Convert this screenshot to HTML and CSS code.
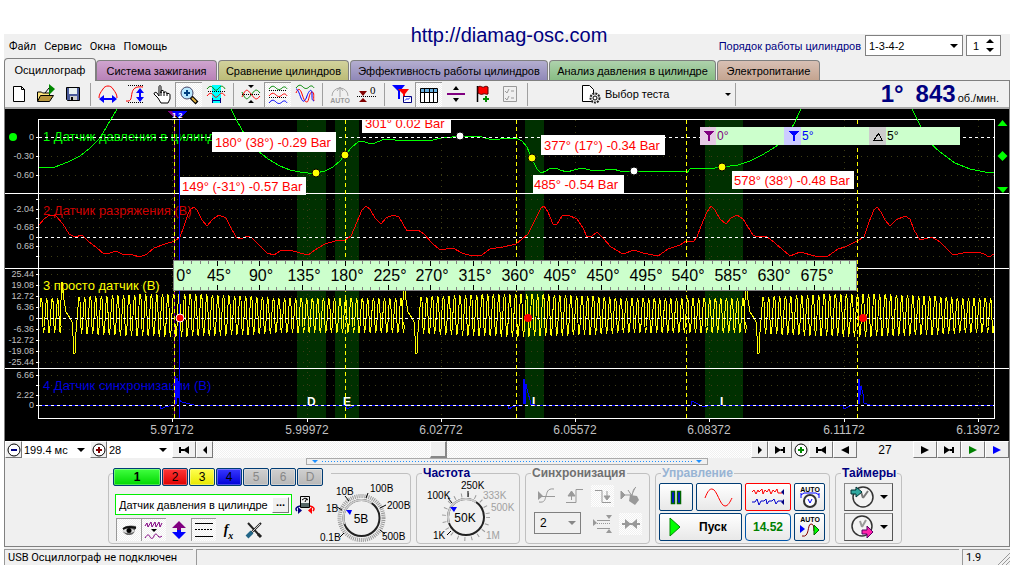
FILE: index.html
```html
<!DOCTYPE html>
<html lang="ru">
<head>
<meta charset="utf-8">
<title>USB Осциллограф</title>
<link rel="stylesheet" href="styles.css">
</head>
<body>
<a class="site-link" href="http://diamag-osc.com">http://diamag-osc.com</a>
<div class="app">
  <header class="topbar">
    <nav class="menu">
      <button>Файл</button><button>Сервис</button><button>Окна</button><button>Помощь</button>
    </nav>
    <label class="order-label" for="order">Порядок работы цилиндров</label>
    <div class="select-box order"><select id="order"><option>1-3-4-2</option></select><i class="caret"></i></div>
    <div class="spin"><input type="text" value="1" aria-label="Цилиндр"><span class="spin-arrows"><i class="caret up"></i><i class="caret"></i></span></div>
  </header>

  <div class="tabs" role="tablist">
    <button class="tab tab-main" role="tab" aria-selected="true">Осциллограф</button>
    <button class="tab tab-ignition" role="tab">Система зажигания</button>
    <button class="tab tab-compare" role="tab">Сравнение цилиндров</button>
    <button class="tab tab-effect" role="tab">Эффективность работы цилиндров</button>
    <button class="tab tab-pressure" role="tab">Анализ давления в цилиндре</button>
    <button class="tab tab-power" role="tab">Электропитание</button>
  </div>

  <main class="panel">
    <div class="toolbar">
      <button class="tool" aria-label="Новый"><svg viewBox="0 0 20 20"><path d="M4.500 2.500h8l3 3v12h-11zM12.500 2.500v3h3" fill="#fff" stroke="#000"/></svg></button>
      <button class="tool" aria-label="Открыть"><svg viewBox="0 0 20 20"><path d="M1.500 17v-9h4l1 1h7v3" fill="#ffe680" stroke="#000"/><path d="M1.500 17.500l3-6h13l-4 6z" fill="#b8963c" stroke="#000"/><path d="M13 0l6 5-6 6z" fill="#080"/><path d="M9 9l4-5" stroke="#000"/></svg></button>
      <button class="tool" aria-label="Сохранить"><svg viewBox="0 0 20 20"><path d="M3.500 3.500h13v13h-12l-1-1z" fill="#4a5a9a" stroke="#000"/><path d="M6 4h8v6H6z" fill="#e8f0f0"/><path d="M7 12h7v4H7z" fill="#ccc"/><path d="M8 13h2v3H8z" fill="#000"/></svg></button>
      <i class="sep"></i>
      <button class="tool" aria-label="Развернуть по горизонтали"><svg viewBox="0 0 20 20"><path d="M1 14c0-3 1-5 4-9 2-4 8-4 10 0 3 4 4 6 4 9" fill="none" stroke="red"/><path d="M4 15h12" stroke="#00f" stroke-width="2"/><path d="M1 15l5-4v8zM19 15l-5-4v8z" fill="#00f"/></svg></button>
      <button class="tool" aria-label="Развернуть по вертикали"><svg viewBox="0 0 20 20"><path d="M1 17c6 1 5-4 6-8s3-7 11-6" fill="none" stroke="red"/><path d="M3 1.500h15M3 18.500h15" stroke="#000" stroke-dasharray="1 1"/><path d="M15 7v8" stroke="#00f" stroke-width="2"/><path d="M15 4l4 5h-8zM15 18l4-5h-8z" fill="#00f"/></svg></button>
      <button class="tool" aria-label="Рука"><svg viewBox="0 0 20 20"><path d="M7 12V3c0-2 2-2 2 0v6-2c0-1 3-1 3 1v1c0-2 3-1 3 0v1c0-1 3-1 3 1v4l-2 4H9l-3-5-4-4c0-2 2-2 3-1z" fill="#fff" stroke="#000"/><path d="M9 8v4M12 8v4M15 9v3" stroke="#000"/></svg></button>
      <button class="tool pressed" aria-label="Лупа"><svg viewBox="0 0 20 20"><path d="M12 12l6 6" stroke="#000" stroke-width="4"/><path d="M13 13l4 4" stroke="#e0b040" stroke-width="2"/><circle cx="8" cy="8" r="6" fill="#b8e8ff" stroke="#446"/><path d="M8 5v6M5 8h6" stroke="#004080" stroke-width="2"/></svg></button>
      <button class="tool" aria-label="Выделить участок"><svg viewBox="0 0 20 20"><path d="M6 1h9v18H6z" fill="#0ff"/><path d="M1 5c3-4 5-3 7 0s4 0 6-2 4 0 5 2" fill="none" stroke="#080"/><path d="M2 7.500h17" stroke="#000" stroke-dasharray="1 1"/><path d="M1 12c3-4 5-3 7 0s4 0 6-2 4 0 5 2" fill="none" stroke="red"/><path d="M7 16.500h7M6.500 14v5M14.500 14v5" stroke="#000080"/></svg></button>
      <i class="sep"></i>
      <button class="tool" aria-label="Совместить"><svg viewBox="0 0 20 20"><path d="M1 8c4 9 5 8 9 3s5-7 9-2" fill="none" stroke="#080"/><path d="M1 13c4-9 5-8 9-3s5 7 9 2" fill="none" stroke="red"/><path d="M1 10.500h18" stroke="#000" stroke-dasharray="1 1"/><path d="M7 1h6l-3 3zM7 19h6l-3-3z"/></svg></button>
      <button class="tool pressed" aria-label="Разделить"><svg viewBox="0 0 20 20"><g fill="none"><path d="M1 4c3-4 5-3 7-1s4 2 6 0 4-1 5 1" stroke="#080"/><path d="M1 11c3-4 5-3 7-1s4 2 6 0 4-1 5 1" stroke="red"/><path d="M1 18c3-4 5-3 7-1s4 2 6 0 4-1 5 1" stroke="#00f"/><path d="M1 5.500h18M1 12.500h18" stroke="#000" stroke-dasharray="1 1"/></g></svg></button>
      <button class="tool" aria-label="Наложить"><svg viewBox="0 0 20 20"><g fill="none"><path d="M1 4c3-4 5-3 7-1s4 2 6 0 4-1 5 1" stroke="#080"/><path d="M1 9c2-5 4-5 6 1s3 8 5 8 2-10 5-10 1 6 2 9" stroke="red"/><path d="M1 5c2 0 3 4 5 9s4 4 6-2 5-8 5-2 0 6 2 7" stroke="#00f"/></g></svg></button>
      <i class="sep"></i>
      <button class="tool" disabled aria-label="Авто"><svg viewBox="0 0 20 20"><path d="M2 12a8 8 0 1 1 16 0M10 13V4M10 3l-3 4M10 3l3 4" fill="none" stroke="#aaa"/><text class="tiny" x="10" y="19" text-anchor="middle" fill="#999">AUTO</text></svg></button>
      <button class="tool" aria-label="Обнулить"><svg viewBox="0 0 20 20"><path d="M2 7h8l-4 5zM2 18h8l-4-4z" fill="#800000"/><path d="M0 12.500h19" stroke="#000" stroke-dasharray="1 1"/><text class="zero" x="13" y="10">0</text></svg></button>
      <i class="sep"></i>
      <button class="tool" aria-label="Маркеры"><svg viewBox="0 0 20 20"><path d="M0 1h13L8 7v8H6V7z" fill="#00f"/><path d="M6 5h11l-4 5v5h-2v-5z" fill="red"/><path d="M11.500 12.500h8v6h-8z" fill="#fff" stroke="#000080"/><path d="M13 16.500l2-2 1 1 2-2" fill="none" stroke="#00f"/></svg></button>
      <button class="tool pressed" aria-label="Таблица"><svg viewBox="0 0 20 20"><path d="M1.500 3.500h17v14h-17z" fill="#fff" stroke="#000"/><path d="M2 4h16v3H2z" fill="#68b0e0"/><path d="M1 7.500h18M5.500 4v14M10.500 4v14M14.500 4v14" stroke="#000"/></svg></button>
      <button class="tool" aria-label="Линейка"><svg viewBox="0 0 20 20"><path d="M1 10h18" stroke="#800080" stroke-width="2"/><path d="M7 6h6l-3-4zM7 14h6l-3 4z"/></svg></button>
      <button class="tool" aria-label="Флаг"><svg viewBox="0 0 20 20"><path d="M4.500 2v16" stroke="#000" stroke-width="1.500"/><path d="M5 3c3-2 4 1 6 0s2-1 4 0v7c-2 1-3-1-5 0s-3 0-5-1z" fill="red" stroke="#500"/><path d="M13 12v6M10 15h6" stroke="#080" stroke-width="2"/></svg></button>
      <button class="tool" disabled aria-label="Список"><svg viewBox="0 0 20 20"><path d="M3.500 2.500h13v15h-13z" fill="none" stroke="#999"/><path d="M5 7l2 2 2-4M5 14l2 2 2-4M11 7h3M11 14h3" fill="none" stroke="#999"/></svg></button>
      <i class="sep"></i>
      <button class="test-picker"><svg viewBox="0 0 20 20"><path d="M1.500 1.500h7l4 4v12h-11z" fill="#fff" stroke="#000"/><circle cx="14" cy="14" r="4.500" fill="#eee" stroke="#222" stroke-width="2" stroke-dasharray="2 1"/><circle cx="14" cy="14" r="2" fill="#fff" stroke="#000"/></svg><span>Выбор теста</span><i class="caret"></i></button>
      <i class="sep"></i>
      <output class="rpm"><b>1°</b><b>843</b><span>об./мин.</span></output>
    </div>

    <svg class="chart" viewBox="5 109 1004 332" role="img" aria-label="Осциллограммы">
      <defs><clipPath id="plot"><path d="M39 120h955v298H39z"/></clipPath></defs>
      <path d="M5 109h1004v332H5z"/>
      <path class="band" d="M297 120h29v298h-29zM335 120h24v298h-24zM525 120h19v298h-19zM705 120h38v298h-38z"/>
      <g id="grid"></g>
      <path class="frame" d="M38.500 119.500h956v299h-956zM5 193.500h1004M5 268.500h1004M5 368.500h1004"/>
      <g class="scale" id="scale"></g>
      <g class="sensor">
        <text x="43" y="141" fill="#0f0">1 Датчик давления в цилиндре (В)</text>
        <text x="43" y="215" fill="#d00000">2 Датчик разряжения (В)</text>
        <text x="43" y="290" fill="#ff0">3 просто датчик (В)</text>
        <text x="43" y="390" fill="#00d">4 Датчик синхронизации (В)</text>
      </g>
      <polyline class="wave" stroke="#0f0" points="39,167 55,167 68,162 80,156 90,148 100,138 107,126 117,109"/>
      <polyline class="wave" stroke="#0f0" points="231,109 236,119 241,128 248,140 257,150 268,159 280,166 290,170 300,172 308,173 316,173 325,171 333,167 340,161 345,155 352,147 358,142 362,141 368,143 375,143 382,140 390,139 400,141 412,140 420,141 433,140 441,138 452,137 460,136 482,137 492,140 500,139 516,138 522,141 527,147 531,157 534,163 537,169 541,173 546,171 551,168 556,168 560,170 567,172 574,170 582,168 590,170 598,171 613,169 620,171 686,171 687,173 690,169 715,168 722,167 738,165 750,161 762,155 772,149 778,145 787,134 794,124 801,109"/>
      <polyline class="wave" stroke="#0f0" points="912,109 920,125 930,143 940,152 955,163 970,169 985,172 994,173"/>
      <polyline class="wave" stroke="red" points="39,225 45,218 50,215 56,216 63,224 69,234 75,237 82,235 88,241 97,248 104,254 110,253 116,251 122,254 133,255 140,257 147,254 154,248 165,244 175,241 180,237 184,226 188,214 191,209 194,207 197,210 202,220 207,226 213,219 219,215 226,218 230,226 236,237 241,239 247,236 252,238 260,246 267,253 274,255 280,251 290,250 300,253 308,255 315,250 325,244 335,241 345,240 351,236 357,222 362,210 366,206 370,209 375,218 381,224 386,218 393,215 399,217 407,231 418,230 424,234 432,243 440,250 453,248 462,253 472,256 482,255 490,249 503,247 516,244 528,234 536,218 541,208 544,206 548,212 553,224 557,224 562,216 568,215 577,219 583,228 587,237 592,236 597,232 603,238 611,247 623,254 634,250 643,253 658,256 668,249 680,245 686,241 693,242 697,237 701,226 707,212 711,206 715,210 720,219 726,224 731,218 737,215 743,219 753,235 757,237 766,236 775,243 790,256 800,252 815,256 828,256 838,249 845,247 857,241 864,237 869,222 874,210 877,207 881,212 885,220 890,226 896,220 905,216 910,219 914,230 920,240 932,237 940,242 953,255 968,252 978,252 984,254 989,257 994,254"/>
      <polyline class="wave" id="teeth" stroke="#ff0"/>
      <g class="phase">
        <text x="307" y="406">D</text><text x="343" y="406">E</text><text x="532" y="406">I</text><text x="720" y="406">I</text>
      </g>
      <path class="zero-line" d="M39 137.500h955M39 237.500h955M39 318.500h955"/>
      <polyline class="wave sync" points="39,405.500 160,405.500 161,409 165,407 174,405 175,376 176,405 177,378 178,398 179,381 179,400 182,402 190,404 196,405.500 346,405.500 347,409 354,406 360,405.500 508,405.500 509,409 512,407 516,405.500 523,405 524,379 525,404 526,384 528,393 530,400 530,404 538,405.500 691,405.500 692,401 698,404 704,407 708,405.500 843,405.500 844,409 850,406 858,405 859,379 859,404 861,386 863,394 864,403 871,405.500 994,405.500"/>
      <path class="zero-line sync-zero" d="M39 405.500h955"/>
      <path d="M174.500 120v298" stroke="#800080"/>
      <path d="M179.500 120v298" stroke="#00f"/>
      <path class="tdc" d="M174.500 120v298M345.500 120v298M516.500 120v298M686.500 120v298M857.500 120v298"/>
      <path d="M167 111h12l-5 7z" fill="#800080"/><path d="M172 111h15l-8 8z" fill="#00f"/>
      <text class="flag-no" x="172" y="118">1</text><text class="flag-no" x="178" y="118">2</text>
      <g class="ruler"><path d="M173.500 260.500h683v30h-683z"/><g id="ruler"></g></g>
      <g class="legend">
        <path d="M700 127h260v18H700z" fill="#cfc"/>
        <path d="M700 127h16v18h-16z" fill="#e6cce6"/><path d="M784 127h17v18h-17z" fill="#ccf"/><path d="M869 127h17v18h-17z" fill="#ccc"/>
        <path d="M703 131h11l-4 5v5h-2v-5z" fill="#800080"/><path d="M788 131h11l-4 5v5h-2v-5z" fill="#00f"/><path d="M873.500 140.500h9l-4-7z" fill="none" stroke="#000"/>
        <text x="717" y="140" fill="#800080">0°</text><text x="802" y="140" fill="#00f">5°</text><text x="887" y="140">5°</text>
      </g>
      <g class="readout">
        <path d="M212 132h124v20H212zM180 177h126v18H180zM362 120h89v13h-89zM541 135h124v20H541zM533 175h91v18h-91zM732 171h122v18H732z"/>
        <text x="215" y="147">180° (38°) -0.29 Bar</text><text x="182" y="191">149° (-31°) -0.57 Bar</text><text clip-path="url(#plot)" x="365" y="128">301° 0.02 Bar</text>
        <text x="544" y="150">377° (17°) -0.34 Bar</text><text x="534" y="189">485° -0.54 Bar</text><text x="734" y="185">578° (38°) -0.48 Bar</text>
      </g>
      <g class="dots" fill="#ff0" stroke="#000"><circle cx="316" cy="173" r="4"/><circle cx="345" cy="155" r="4"/><circle cx="532" cy="158" r="4"/><circle cx="722" cy="167" r="4"/><g fill="#fff"><circle cx="460" cy="136" r="4"/><circle cx="634" cy="171" r="4"/></g></g>
      <g class="dots" fill="red"><circle cx="180" cy="318" r="4" stroke="#fff"/><circle cx="528" cy="318" r="4"/><circle cx="863" cy="318" r="4"/></g>
      <g class="dots" fill="#0f0"><circle cx="13" cy="137" r="4"/><path d="M1002.500 120l5 6h-10zM1002.500 151l5 5-5 5-5-5zM997 187h11l-5 6z"/></g>
    </svg>

    <div class="scrollbar">
      <button class="nav round" aria-label="Меньше времени"><svg viewBox="0 0 16 16"><circle cx="8" cy="8" r="6" fill="#fff" stroke="#000"/><path d="M5 8h6" stroke="#000080" stroke-width="2"/></svg></button>
      <div class="combo combo-time"><select aria-label="Развёртка"><option>199.4 мс</option></select><i class="caret"></i></div>
      <button class="nav round" aria-label="Больше"><svg viewBox="0 0 16 16"><circle cx="8" cy="8" r="6" fill="#fff" stroke="#000"/><path d="M5 8h6M8 5v6" stroke="#800000" stroke-width="2"/></svg></button>
      <div class="combo combo-frame"><select aria-label="Кадр"><option>28</option></select><i class="caret"></i></div>
      <button class="nav wide" aria-label="В начало"><svg viewBox="0 0 16 16"><path d="M3 5h2v6H3zM13 4v8L7 8zM5 7h3v2H5z"/></svg></button>
      <button class="nav" aria-label="Назад"><svg viewBox="0 0 16 16"><path d="M10 4v8L6 8z"/></svg></button>
      <input class="scroll" type="range" min="0" max="1000" value="416" aria-label="Положение">
      <button class="nav" aria-label="Вперёд"><svg viewBox="0 0 16 16"><path d="M6 4v8l4-4z"/></svg></button>
      <button class="nav wide" aria-label="В конец"><svg viewBox="0 0 16 16"><path d="M11 5h2v6h-2zM3 4v8l6-4zM8 7h3v2H8z"/></svg></button>
      <button class="nav round flat" aria-label="Добавить"><svg viewBox="0 0 16 16"><circle cx="8" cy="8" r="6" fill="#fff" stroke="#000"/><path d="M5 8h6M8 5v6" stroke="#080" stroke-width="2"/></svg></button>
      <button class="nav wide" aria-label="Первый кадр"><svg viewBox="0 0 16 16"><path d="M3 5h2v6H3zM13 4v8L7 8zM5 7h3v2H5z"/></svg></button>
      <button class="nav wide" aria-label="Предыдущий кадр"><svg viewBox="0 0 16 16"><path d="M12 4v8L4 8z"/></svg></button>
      <span class="frame-no">27</span>
      <button class="nav wide" aria-label="Следующий кадр"><svg viewBox="0 0 16 16"><path d="M4 4v8l8-4z"/></svg></button>
      <button class="nav wide" aria-label="Последний кадр"><svg viewBox="0 0 16 16"><path d="M11 5h2v6h-2zM3 4v8l6-4zM8 7h3v2H8z"/></svg></button>
      <button class="nav wide" aria-label="Воспроизвести"><svg viewBox="0 0 16 16"><path d="M4 4v8l8-4z" fill="#008000"/></svg></button>
      <button class="nav wide" aria-label="Воспроизвести далее"><svg viewBox="0 0 16 16"><path d="M4 4v8l8-4z" fill="#00f"/></svg></button>
    </div>

    <button class="splitter" aria-label="Свернуть панель"><i></i><span></span><i></i></button>

    <div class="controls">
      <section class="group channel">
        <div class="channel-form">
          <div class="channels">
            <button class="ch ch-1">1</button><button class="ch ch-2">2</button><button class="ch ch-3">3</button><button class="ch ch-4">4</button><button class="ch ch-off" disabled>5</button><button class="ch ch-off" disabled>6</button><button class="ch ch-off" disabled>D</button>
          </div>
          <div class="sensor-row">
            <div class="sensor-box"><input type="text" value="Датчик давления в цилиндре" aria-label="Датчик"><button class="more" aria-label="Выбрать">...</button></div>
            <button class="icon-btn" aria-label="Калибровка"><svg viewBox="0 0 20 20"><path d="M5.500 1.500h9v11h-9z" fill="#eee" stroke="#000"/><path d="M6 8h8v4H6z" fill="#566"/><path d="M7 5l3-2 3 2M10 7l2-4" fill="none" stroke="#000"/><path d="M5 11c-4 1-5 3-3 5" fill="none" stroke="#000080" stroke-width="1.500"/><path d="M3 12v7l4-3.500z" fill="#000080"/><path d="M15 11c4 1 5 3 3 5" fill="none" stroke="red" stroke-width="1.500"/><path d="M17 12v7l-4-3.500z" fill="red"/></svg></button>
          </div>
          <div class="channel-tools">
            <button class="icon-btn pressed" aria-label="Показать"><svg viewBox="0 0 20 20"><path d="M4 8c4-3 8-3 13-2l-1 4c-1 4-3 5-6 5-4 0-4-2-6-3z" fill="#666"/><path d="M3 11c4-4 10-3 13 0-4 3-9 3-13 0z" fill="#ddd"/><circle cx="10" cy="10.500" r="2.500"/><path d="M4 9c4-3 9-2 13-1" fill="none" stroke="#111" stroke-width="2"/></svg></button>
            <button class="icon-btn pressed" aria-label="Фильтр"><svg viewBox="0 0 20 20"><path d="M1 6l2-3 1 4 3-5 1 5 3-5 1 5 3-5 1 5 2-4M1 18c3-5 4-3 5-1s3 2 4-1 3-2 4 0 3 1 4 0" fill="none" stroke="#800080"/><path d="M7 9h6l-3 3z"/></svg></button>
            <button class="icon-btn" aria-label="Инвертировать"><svg viewBox="0 0 20 20"><path d="M10 1l7 7h-5v2H8V8H3z" fill="#800080"/><path d="M10 19l7-7h-5v-2H8v2H3z" fill="#00f"/></svg></button>
            <button class="icon-btn pressed" aria-label="Уровни"><svg viewBox="0 0 20 20"><path d="M1 3.500h18M1 16.500h18" stroke="#000"/><path d="M1 9.500h18" stroke="#000" stroke-dasharray="2 1"/></svg></button>
            <button class="icon-btn fx" aria-label="Функция">f<small>x</small></button>
            <button class="icon-btn" aria-label="Настройка"><svg viewBox="0 0 20 20"><path d="M4 3l11 12" stroke="#222" stroke-width="2"/><path d="M14 14l3 3" stroke="#222" stroke-width="3"/><path d="M17 3L6 14" stroke="#222" stroke-width="2"/><path d="M16 4l-9 9" stroke="#ccc"/><path d="M8 12l-5 5" stroke="#268" stroke-width="4"/></svg></button>
          </div>
        </div>
        <svg class="knob knob-volt" viewBox="318 481 92 62" role="img" aria-label="Диапазон 5В">
          <circle class="dashes" cx="361.500" cy="518" r="22"/>
          <path class="mark" d="M344 533l-4 4M342 510l-5-3M349 501l-4-5M366 498l2-5M380 508l6-3M380 530l5 4"/>
          <circle class="knob-edge" cx="361.500" cy="518" r="18"/><circle class="knob-shine" cx="361.500" cy="518" r="18"/>
          <path d="M346 510h6l-2 5z" fill="#00f"/>
          <text class="knob-value" x="361" y="523">5В</text>
          <g class="knob-text"><text x="336" y="495">10В</text><text x="370" y="492">100В</text><text x="326" y="512">1В</text><text x="387" y="509">200В</text><text x="382" y="540">500В</text><text x="320" y="541">0.1В</text></g>
        </svg>
      </section>

      <fieldset class="group freq">
        <legend>Частота</legend>
        <svg class="knob" viewBox="418 481 100 62" role="img" aria-label="Частота 50K">
          <circle class="dashes sparse" cx="466" cy="518" r="22"/>
          <path class="mark" d="M451 532l-4 4M452 504l-4-5M468 498v-6"/>
          <circle class="knob-edge" cx="466" cy="518" r="18"/><circle class="knob-shine" cx="466" cy="518" r="18"/>
          <path d="M450 508h7l-3 5z" fill="#00f"/>
          <text class="knob-value" x="465" y="523">50K</text>
          <g class="knob-text"><text x="461" y="490">250K</text><text x="427" y="500">100K</text><text x="433" y="540">1K</text><g class="dim"><text x="483" y="500">333K</text><text x="491" y="512">500K</text><text x="486" y="540">1M</text></g></g>
        </svg>
      </fieldset>

      <fieldset class="group sync-group" disabled>
        <legend>Синхронизация</legend>
        <div class="sync-grid">
          <button class="icon-btn" aria-label="Уровень"><svg viewBox="0 0 20 20"><path d="M3 16c6 1 6-3 7-6s1-8 8-7M5 10.500h14" fill="none" stroke="#999"/><path d="M2 5v9l5-4z" fill="#999"/></svg></button>
          <button class="icon-btn" aria-label="По фронту"><svg viewBox="0 0 20 20"><path d="M2 16.500h10v-13h7" fill="none" stroke="#999"/><path d="M4 10h7l-3.500-5zM7.500 8v6" fill="#999" stroke="#999"/></svg></button>
          <button class="icon-btn pressed" aria-label="По спаду"><svg viewBox="0 0 20 20"><path d="M2 4.500h7v12h9" fill="none" stroke="#999"/><path d="M11 10h6l-3 4zM14 5v6" fill="#999" stroke="#999"/></svg></button>
          <button class="icon-btn" aria-label="Вручную"><svg viewBox="0 0 20 20"><path d="M1 5v8l4-4zM5 9h8M8 4l4 6M16 1c-3 2-3 5-4 8" fill="#999" stroke="#999"/><path d="M10 9l7 1 2 4-4 5-6-4z" fill="#999"/></svg></button>
          <div class="select-box sync-select"><select aria-label="Канал синхронизации"><option>2</option></select><i class="caret"></i></div>
          <button class="icon-btn" aria-label="Зона"><svg viewBox="0 0 20 20"><path d="M1 5v7l4-3zM14 1h6l-3 4zM14 19h6l-3-4z" fill="#999"/><path d="M5 6.500h13M5 14.500h13" stroke="#999"/><path d="M5 9.500h13" stroke="#999" stroke-dasharray="1 1"/></svg></button>
          <button class="icon-btn pressed" aria-label="Центр"><svg viewBox="0 0 20 20"><path d="M1 10h18" stroke="#999" stroke-width="2"/><path d="M4 5l6 5-6 5zM16 5l-6 5 6 5z" fill="#999"/></svg></button>
        </div>
      </fieldset>

      <fieldset class="group run-group">
        <legend>Управление</legend>
        <div class="run-grid">
          <button class="big" aria-label="Пауза"><svg viewBox="0 0 20 20"><path d="M5.500 4.500h3v12h-3zM11.500 4.500h3v12h-3z" fill="#00f" stroke="#060" stroke-width="1.500"/></svg></button>
          <button class="big" aria-label="Один сигнал"><svg class="wide-icon" viewBox="0 0 32 20"><path d="M2 11c3-8 5-9 7-9 5 0 8 17 13 17 3 0 5-4 7-8" fill="none" stroke="red"/></svg></button>
          <button class="big hot" aria-label="Непрерывно"><svg class="wide-icon" viewBox="0 0 32 20"><path d="M0 5l2-2 2 4 2-4 1 2 3-3 1 5 2-4 2 2 2-3 2 5 2-4 2 2 2-3 1 4h4" fill="none" stroke="red"/><path d="M0 15h3l2-3 2 6 2-4h3l2-2 1 5 2-3h3l2-2 2 5 2-3h4" fill="none" stroke="#00c"/><path d="M32 2v6l-3-3zM32 12v6l-3-3z" fill="#000080"/></svg></button>
          <button class="big" aria-label="Авто диапазон"><svg class="tall-icon" viewBox="0 0 20 24"><text class="tiny" x="10" y="7" text-anchor="middle">AUTO</text><path d="M1 10l3-2h12l3 2M1 8v5M19 8v5" fill="none" stroke="#00f"/><circle cx="10" cy="16" r="6" fill="#fff" stroke="#333" stroke-width="2"/><path d="M8 14l2 4 2-4" fill="none" stroke="#00f"/></svg></button>
          <button class="big start"><svg viewBox="0 0 20 20"><path d="M5 1v18l10-9z" fill="#0f0" stroke="#080"/></svg>Пуск</button>
          <button class="big volt">14.52</button>
          <button class="big" aria-label="Авто запуск"><svg class="tall-icon" viewBox="0 0 20 24"><text class="tiny" x="10" y="7" text-anchor="middle">AUTO</text><path d="M0 10l5 4-5 4z" fill="#00f"/><path d="M2 21c8 2 5-12 9-12s2 6 3 7" fill="none" stroke="#800000"/><path d="M14 10v10l5-5z" fill="#0f0" stroke="#060"/></svg></button>
        </div>
      </fieldset>

      <fieldset class="group timer-group">
        <legend>Таймеры</legend>
        <button class="timer" aria-label="Таймер запуска"><svg viewBox="0 0 26 26"><circle cx="14" cy="13" r="10" fill="#f4f4f4" stroke="#333" stroke-width="1.500"/><path d="M14 14l-2-6M14 14l5-7" stroke="#777" stroke-width="2"/><path d="M2 6h5V3l6 5-6 5v-3H2z" fill="#30a8a0" stroke="#033"/></svg><i class="caret"></i></button>
        <button class="timer" aria-label="Таймер остановки"><svg viewBox="0 0 26 26"><circle cx="13" cy="12" r="10" fill="#f4f4f4" stroke="#333" stroke-width="1.500"/><path d="M13 13l-2-6M13 13l4-7" stroke="#999" stroke-width="2"/><path d="M13 16h5v-4l6 6-6 6v-4h-5z" fill="#f2a" stroke="#506"/></svg><i class="caret"></i></button>
      </fieldset>
    </div>
  </main>

  <footer class="status">
    <span class="status-text">USB Осциллограф не подключен</span><span></span>
    <span class="version">1.9<svg viewBox="0 0 12 12"><path d="M0 12L12 0M4 12l8-8M8 12l4-4" stroke="#999"/></svg></span>
  </footer>
</div>
<script src="chart.js"></script>
</body>
</html>
```
FILE: styles.css
```css
* { box-sizing: border-box; }
body { margin: 0; background: #fff; font-family: "Liberation Sans", Arial, sans-serif; font-size: 11px; color: #000; }
button, input, select { font: inherit; color: inherit; padding: 0; margin: 0; border: 0; border-radius: 0; background: none; }
button { display: inline-flex; align-items: center; justify-content: center; }
select { appearance: none; width: 100%; opacity: 1; }
svg { display: block; flex: none; }

.site-link { position: absolute; top: 23px; left: 0; right: 4px; width: max-content; margin: 0 auto; font-size: 20px; line-height: 24px; color: #000080; text-decoration: none; }
.app { margin: 34px 12px 0 4px; background: #f0f0f0; }

.caret { width: 0; height: 0; border: 4px solid transparent; border-top-color: currentColor; border-bottom: 0; flex: none; pointer-events: none; }
.caret.up { border-bottom: 4px solid currentColor; border-top: 0; }

.topbar { display: flex; align-items: flex-start; height: 24px; padding: 1px 9px 0 5px; }
.menu { display: flex; gap: 8px; margin-right: auto; font-family: Roboto, sans-serif; font-size: 11px; line-height: 24px; }
.order-label { color: #000080; line-height: 22px; margin-right: 4px; }
.select-box { display: flex; align-items: center; border: 1px solid #808080; background: #fff; padding: 0 4px 0 3px; }
.order { width: 98px; height: 21px; margin-right: 3px; }
.spin { display: flex; align-items: center; width: 35px; height: 21px; border: 1px solid #808080; background: #fff; padding: 0 6px; }
.spin input { width: 100%; min-width: 0; }
.spin-arrows { display: grid; gap: 5px; }

.tabs { display: flex; align-items: flex-end; gap: 1px; height: 22px; }
.tab { height: 20px; border: 1px solid #808080; border-bottom: 0; border-radius: 4px 4px 0 0; white-space: nowrap; }
.tab-main { position: relative; width: 92px; height: 23px; margin: 0 -1px -1px 0; background: #f0f0f0; }
.tab-ignition { width: 121px; background: linear-gradient(#cfa4cf, #b882b8); }
.tab-compare { width: 131px; background: linear-gradient(#d2d29c, #bcbc78); }
.tab-effect { width: 198px; background: linear-gradient(#b4aed0, #9088b8); }
.tab-pressure { width: 167px; background: linear-gradient(#aed2ac, #88bc84); }
.tab-power { width: 103px; background: linear-gradient(#d8c0b4, #c4a490); }

.panel { border: 1px solid #808080; border-top: 0; }
.toolbar { display: flex; align-items: center; height: 29px; padding: 1px 10px 1px 0; border-top: 1px solid #808080; border-bottom: 2px solid #a8a8a8; }
.tool { width: 27px; height: 25px; }
.tool svg, .icon-btn svg { width: 20px; height: 20px; }
.pressed { border-top: 1px solid #999; border-left: 1px solid #999; background: repeating-conic-gradient(#fff 0 25%, #f0f0f0 0 50%) 0 0 / 2px 2px; }
.sep { width: 8px; height: 23px; flex: none; background: linear-gradient(#a0a0a0, #a0a0a0) center / 1px 100% no-repeat; }
.tiny { font: bold 7px "Liberation Sans", sans-serif; }
.zero { font: 11px "Liberation Serif", serif; }
.test-picker { margin-left: 50px; gap: 4px; width: 150px; justify-content: flex-start; }
.test-picker svg { width: 20px; height: 20px; }
.test-picker .caret { margin-left: auto; border-width: 3px; border-bottom: 0; }
.rpm { display: flex; align-items: baseline; margin-left: auto; color: #000080; white-space: nowrap; }
.rpm b { font-size: 24px; line-height: 26px; margin-right: 12px; }
.rpm b + b { margin-right: 2px; }
.rpm span { color: #000; }

.chart { width: 100%; height: auto; shape-rendering: crispEdges; }
.band { fill: #003000; }
.frame { fill: none; stroke: #fff; }
.grid-line { stroke: #3c3c14; stroke-dasharray: 1 5; }
.scale { font-size: 9px; fill: #c0c0c0; text-anchor: end; }
.scale path { stroke: #fff; }
.scale .time { font-size: 12px; text-anchor: middle; }
.sensor { font-size: 13px; }
.phase { fill: #fff; font-size: 12px; font-weight: bold; }
.wave { fill: none; }
.sync { stroke: #00f; }
.zero-line { stroke: #fff; stroke-dasharray: 3 3; }
.tdc { stroke: #ff0; stroke-dasharray: 4 3; }
.flag-no { fill: #fff; font-size: 8px; font-weight: bold; }
.ruler { fill: #cfc; stroke: #808080; }
.ruler text { fill: #000; stroke: none; font-size: 16px; text-anchor: middle; }
.ruler .major { stroke: #000; }
.legend { font-size: 12px; }
.readout { fill: #fff; font-size: 13px; }
.readout text { fill: red; }
.dots { shape-rendering: geometricPrecision; }

.scrollbar { display: flex; height: 17px; }
.nav { width: 17px; background: #f0f0f0; border: 1px solid #fff; border-right-color: #777; border-bottom-color: #777; flex: none; }
.nav.wide { width: 24px; }
.nav.flat { border-color: #f0f0f0; }
.nav svg { width: 16px; height: 16px; }
.combo { display: flex; align-items: center; background: #fff; padding: 0 5px 0 2px; }
.combo-time { width: 68px; }
.combo-frame { width: 65px; }
.scroll { appearance: none; flex: 1; min-width: 0; height: 17px; background: repeating-conic-gradient(#fff 0 25%, #f0f0f0 0 50%) 0 0 / 2px 2px; }
.scroll::-webkit-slider-thumb { appearance: none; width: 17px; height: 17px; background: #f0f0f0; border: 1px solid #fff; border-right: 2px solid #888; border-bottom: 2px solid #888; }
.frame-no { width: 56px; font-size: 12px; text-align: center; line-height: 18px; }

.splitter { display: flex; width: 402px; max-width: 100%; height: 7px; margin: 0 auto; padding: 0 5px; gap: 4px; border: 1px solid #aaa; }
.splitter i { border: 3px solid transparent; border-top-color: #1e90ff; border-bottom: 0; }
.splitter span { flex: 1; height: 1px; background: repeating-linear-gradient(90deg, #1e90ff 0 1px, transparent 1px 3px); }

.controls { display: flex; justify-content: center; gap: 5px; padding: 1px 4px 2px 0; }
.group { margin: 0; padding: 0; min-width: 0; border: 1px solid #c0c0c0; border-radius: 4px; height: 78px; flex: none; }
.group legend { margin-left: 5px; padding: 0 1px; font-size: 12px; line-height: 14px; font-weight: bold; color: #000080; }
.channel { display: flex; width: 303px; height: 71px; margin-top: 7px; }
.channel-form { width: 209px; padding-left: 4px; }
.channels { display: flex; gap: 1px; width: 218px; margin-top: -6px; background: #f0f0f0; font-size: 12px; }
.ch { width: 26px; height: 18px; border: 1px solid #003c74; border-radius: 2px; box-shadow: inset 0 0 0 1px rgba(255, 255, 255, 0.3); }
.ch-1 { width: 48px; background: linear-gradient(#40ff40, #00d800); font-weight: bold; }
.ch-2 { background: linear-gradient(#ff3838, #e00000); }
.ch-3 { background: linear-gradient(#ffff50, #e8e800); }
.ch-4 { background: linear-gradient(#3838ff, #0000d8); }
.ch-off { background: linear-gradient(#d0d0d0, #b8b8b8); color: #888; }
.sensor-row { display: flex; align-items: center; margin: 7px 0 2px 2px; }
.sensor-box { display: flex; align-items: center; width: 177px; height: 21px; border: 1px solid #0e0; background: #fff; padding: 0 2px 0 3px; }
.sensor-box input { flex: 1; min-width: 0; }
.more { width: 17px; height: 16px; background: #f0f0f0; border: 1px solid #fff; border-right-color: #777; border-bottom-color: #777; font-weight: bold; line-height: 8px; align-items: flex-start; flex: none; }
.icon-btn { width: 25px; height: 23px; flex: none; }
.channel-tools { display: flex; margin-left: 3px; }
.fx { font: italic bold 14px "Liberation Serif", serif; }
.fx small { font-size: 10px; align-self: flex-end; }

.knob { width: 92px; height: 62px; overflow: visible; margin-top: 7px; }
.freq { width: 104px; }
.freq .knob { width: 100px; margin: 0 0 0 1px; }
.dashes { fill: none; stroke: #999; stroke-width: 4px; stroke-dasharray: 1 1; }
.dashes.sparse { stroke-dasharray: 1 6; }
.mark { stroke: #000; fill: none; }
.knob-edge { fill: #f0f0f0; stroke: #222; stroke-width: 2px; }
.knob-shine { fill: none; stroke: #ccc; stroke-width: 2px; stroke-dasharray: 45 70; stroke-dashoffset: -50px; }
.knob-value { font-size: 12px; text-anchor: middle; }
.knob-text { font-size: 10px; }
.dim { fill: #a0a0a0; }

.sync-group { width: 125px; }
.sync-group legend { color: #707070; }
.sync-grid { display: grid; grid-template-columns: repeat(4, 24px); gap: 5px 4px; padding: 4px 0 0 8px; }
.sync-grid .icon-btn { width: 24px; height: 23px; }
.sync-grid .pressed { border-color: #f0f0f0; }
.sync-select { grid-column: span 2; width: 47px; height: 22px; background: #f0f0f0; padding-left: 5px; font-size: 12px; }
.sync-select select { color: #000; }
.sync-select .caret { color: #888; }

.run-group { width: 175px; }
.run-group legend { color: #98b4d4; }
.run-grid { display: grid; grid-template-columns: 34px 46px 46px 31px; gap: 2px 3px; padding: 3px 0 0 3px; font-size: 12px; }
.big { height: 28px; background: linear-gradient(#fff, #e8e8e8); border: 1px solid #003c74; border-radius: 2px; }
.big svg { width: 20px; height: 20px; }
.big .wide-icon { width: 32px; }
.big .tall-icon { height: 24px; }
.hot { border-color: red; }
.start { grid-column: span 2; justify-content: flex-start; gap: 14px; padding-left: 5px; font-weight: bold; }
.volt { border-color: #0054a8; border-radius: 4px; color: #008000; font-weight: bold; }

.timer-group { width: 67px; }
.timer { display: flex; gap: 5px; width: 49px; height: 28px; margin: 3px 0 0 8px; background: #f0f0f0; border: 1px solid #888; border-right-color: #555; border-bottom-color: #555; }
.timer + .timer { margin-top: 2px; }
.timer svg { width: 26px; height: 26px; }

.status { display: grid; grid-template-columns: 189px 1fr 48px; gap: 3px; padding-top: 2px; height: 18px; font-family: Roboto, sans-serif; font-size: 11px; line-height: 15px; }
.status > span { border-top: 1px solid #999; border-left: 1px solid #999; padding-left: 3px; white-space: nowrap; }
.status .version { display: flex; justify-content: space-between; align-items: flex-end; }
.version svg { width: 12px; height: 12px; }
```
FILE: chart.js
```js
const NS = 'http://www.w3.org/2000/svg';

function add(parent, tag, attrs, text) {
  const node = document.createElementNS(NS, tag);
  for (const key in attrs) node.setAttribute(key, attrs[key]);
  if (text !== undefined) node.textContent = text;
  parent.appendChild(node);
}

const grid = document.getElementById('grid');
const scale = document.getElementById('scale');

// Level marks: [y, label]
const levels = [
  [137, '0'], [156, '-0.30'], [175, '-0.60'],
  [199], [209, '-2.04'], [218], [227, '-0.68'], [237, '0'], [246, '0.68'], [256],
  [274, '25.44'], [285, '19.08'], [296, '12.72'], [307, '6.36'], [318, '0'],
  [329, '-6.36'], [340, '-12.72'], [351, '-19.08'], [362, '-25.44'],
  [375, '6.66'], [385], [395, '2.22'], [405, '0']
];
levels.forEach(([y, label]) => {
  add(grid, 'path', { class: 'grid-line', d: `M39 ${y + 0.5}h955` });
  add(scale, 'path', { d: `M36 ${y + 0.5}h3` });
  if (label) add(scale, 'text', { x: 34, y: y + 3 }, label);
});

// Time marks
[172, 307, 441, 575, 709, 844, 978].forEach((x, i) => {
  add(grid, 'path', { class: 'grid-line', d: `M${x + 0.5} 120v298` });
  add(scale, 'path', { d: `M${x + 0.5} 418v4` });
  add(scale, 'text', { class: 'time', x, y: 434 }, (5.97172 + i * 0.028).toFixed(5));
});

// Crank angle ruler, 9 degrees per division
const ruler = document.getElementById('ruler');
for (let i = 1; i < 80; i++) {
  const x = Math.round(174 + i * 8.54) + 0.5;
  const major = i % 5 === 0;
  const size = major ? 5 : 3;
  add(ruler, 'path', { class: major ? 'major' : 'minor', d: `M${x} 261v${size}M${x} 290v${-size}` });
}
for (let i = 0; i < 16; i++) {
  add(ruler, 'text', { x: i ? Math.round(174 + i * 42.7) + 2 : 184, y: 281 }, i * 45 + '°');
}

// Toothed wheel signal with a gap every revolution
const points = [];
const gaps = [62, 404, 746];
const shape = [[-2, 318], [0, 282], [1, 290], [2, 300], [4, 312], [8, 318], [10, 322], [11, 336], [12, 354], [13, 353], [14, 332], [15, 320]];
let x = 39;
let gap = 0;
while (x < 994) {
  if (gap < gaps.length && x > gaps[gap] - 4) {
    shape.forEach(([dx, y]) => points.push(`${gaps[gap] + dx},${y}`));
    x = gaps[gap] + 15;
    gap++;
  } else {
    const phase = gap ? (x - gaps[gap - 1]) / 342 : 0.9;
    const amp = 19 + 4 * Math.sin(Math.PI * Math.min(1, phase * 1.6));
    [[1, -amp * 0.5], [2, -amp], [3, -amp * 0.8], [3.6, amp * 0.3], [4.5, amp * 0.85], [5.5, amp * 0.5]].forEach(([dx, dy]) => {
      points.push(`${(x + dx).toFixed(1)},${(317 + dy).toFixed(1)}`);
    });
    x += 5.55;
  }
}
document.getElementById('teeth').setAttribute('points', points.join(' '));
```
